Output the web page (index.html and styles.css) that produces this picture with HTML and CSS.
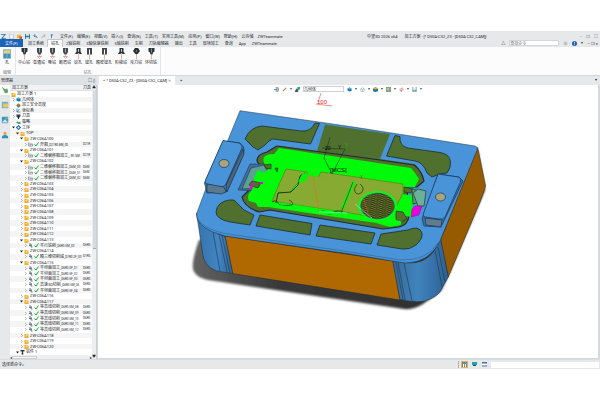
FILE: index.html
```html
<!DOCTYPE html>
<html lang="zh-CN">
<head>
<meta charset="utf-8">
<title>加工方案</title>
<link rel="stylesheet" href="styles.css">
</head>
<body>
<svg class="defs" aria-hidden="true">
  <symbol id="folder" viewBox="0 0 10 10"><path d="M1 2h3l1 1h4v6H1z" fill="#f1a51d"/><path d="M3 4h4v3H3z" fill="#ffdf65"/><path d="M1 8h8v1H1z" fill="#df8518"/></symbol>
  <symbol id="cube" viewBox="0 0 10 10"><path d="M1 3l4-2 4 2v5L5 9 1 7z" fill="#1675a9"/><path d="M1 3l4-2 4 2-4 2z" fill="#45bedb"/></symbol>
  <symbol id="safe" viewBox="0 0 10 10"><circle cx="5" cy="5" r="4" fill="#df7c32"/><path d="M1 5l4 4 4-4-4-1z" fill="#2e8d9d"/></symbol>
  <symbol id="axis" viewBox="0 0 10 10"><path d="M2 1v7h7M2 8l5-6" fill="none" stroke="#2877a0" stroke-width="1.5"/></symbol>
  <symbol id="tool" viewBox="0 0 10 10"><path d="M1 1h8v3L6 8H4L1 5z" fill="#34434b"/><path d="M5 5v5" stroke="#222" stroke-width="2"/></symbol>
  <symbol id="plan" viewBox="0 0 10 10"><path d="M0 5l4-3v2h5v4H4V7z" fill="#38a77a"/></symbol>
  <symbol id="gear" viewBox="0 0 10 10"><circle cx="5" cy="5" r="3" fill="none" stroke="#266eab" stroke-width="2.4"/><path d="M5 0v2M5 8v2M0 5h2M8 5h2" stroke="#266eab" stroke-width="2"/></symbol>
  <symbol id="mill" viewBox="0 0 10 10"><path d="M1 1v7h8V4H6v2H4V1" fill="none" stroke="#7b858b" stroke-width="1.4"/></symbol>
  <symbol id="spiral" viewBox="0 0 10 10"><path d="M2 2h4v6h3M2 5h6" fill="none" stroke="#6c7c84" stroke-width="2"/></symbol>
  <symbol id="part" viewBox="0 0 10 10"><path d="M1 0h8v3H6l1 6H3l1-6H1z" fill="#30343a"/></symbol>
  <symbol id="check" viewBox="0 0 10 10"><path d="M1 5l3 3 5-7" fill="none" stroke="#00b62c" stroke-width="2"/></symbol>
  <symbol id="drill" viewBox="0 0 14 24"><path d="M1 0h12v7l-3 2-1 4H5L4 9 1 7z" fill="#2d3337"/><path d="M6 1h2v8H6z" fill="#889398"/><path d="M7 13v10" stroke="#d45f62"/></symbol>
  <symbol id="drillwide" viewBox="0 0 14 24"><path d="M3 0h8v7l3 5H9l-2-2-2 2H0l3-5z" fill="#2d3438"/><path d="M6 2h2v6H6z" fill="#bbc5ca"/><path d="M7 11v12" stroke="#d45f62"/></symbol>
  <symbol id="ream" viewBox="0 0 14 24"><path d="M2 0h10v13H8V3H6v10H2z" fill="#42484d"/><path d="M7 12v11" stroke="#d45f62"/></symbol>
  <symbol id="chamfer" viewBox="0 0 14 24"><path d="M2 0h10v8l-3 5H5L2 8z" fill="#42484d"/><path d="M6 1h2v8H6z" fill="#9fa9ae"/><path d="M2 16l5 5 5-5M7 13v4M4 17h6" fill="none" stroke="#d45f62"/></symbol>
  <symbol id="disc" viewBox="0 0 14 24"><path d="M4 0h6l4 6-4 5-3 2-3-2-4-5z" fill="#262b2e"/><circle cx="7" cy="6" r="2" fill="#6d777c"/><path d="M7 13v10" stroke="#d45f62"/></symbol>
  <symbol id="down" viewBox="0 0 4 3"><path d="M0 0h4L2 3z" fill="#111"/></symbol>
</svg>
<div class="app">
  <header class="titlebar">
    <div class="quick">
      <svg viewBox="0 0 6 6"><path d="M0 0h6L2 5h4v1H0l4-5H0z" fill="#187b9d"/></svg>
      <svg viewBox="0 0 6 6"><path d="M1 0h3l1 1v5H1z" fill="#fff" stroke="#8c9296" stroke-width=".6"/></svg>
      <svg viewBox="0 0 6 6"><path d="M0 1h5v4H0z" fill="#f2b72c"/><path d="M3 3h3v3H3z" fill="#db5338"/></svg>
      <svg viewBox="0 0 6 6"><path d="M0 0h6v6H0z" fill="#26759b"/><path d="M1 0h4v2H1zM1 4h4v2H1z" fill="#d6edf3"/></svg>
      <svg viewBox="0 0 6 6"><path d="M5 5Q5 2 1 2l2-2M1 2l2 2" fill="none" stroke="#2378bc"/></svg>
      <svg viewBox="0 0 6 6"><path d="M1 5q0-3 4-3L3 0M5 2L3 4" fill="none" stroke="#a9adb0"/></svg>
      <svg viewBox="0 0 6 6"><path d="M2 1h3M3 1v4" fill="none" stroke="#2378bc"/></svg>
    </div>
    <nav class="menu"><a href="#">文件(F)</a><a href="#">编辑(E)</a><a href="#">视图(V)</a><a href="#">插入(I)</a><a href="#">查询(N)</a><a href="#">工具(T)</a><a href="#">实用工具(M)</a><a href="#">应用(P)</a><a href="#">窗口(W)</a><a href="#">帮助(H)</a><a href="#">云存储</a><a href="#">ZWTeammate</a></nav>
    <div class="caption"><span>中望3D 2026 x64</span><span>加工方案 - [* D50A-C52_Z3 - [D50A-C52_CAM]]</span></div>
    <div class="winbtns"><button aria-label="最小化">–</button><button aria-label="还原">❐</button><button aria-label="关闭">□</button></div>
  </header>
  <div class="tabbar">
    <button class="filebtn">文件(F)</button>
    <nav class="tabs"><a href="#">加工系统</a><a href="#" class="active">钻孔</a><a href="#">2轴铣削</a><a href="#">3轴快速铣削</a><a href="#">5轴铣削</a><a href="#">车削</a><a href="#">刀轨编辑器</a><a href="#">输出</a><a href="#">工具</a><a href="#">现场加工</a><a href="#">查询</a><a href="#">App</a><a href="#">ZWTeammate</a></nav>
    <div class="search"><span>△</span><input type="text" aria-label="查找命令" placeholder="查找命令"><svg viewBox="0 0 6 6"><circle cx="3" cy="3" r="2.4" fill="#bcc3c8"/></svg><svg viewBox="0 0 6 6"><circle cx="3" cy="3" r="3" fill="#1863b6"/><path d="M3 1v2M3 4v1" stroke="#fff"/></svg><svg class="tri"><use href="#down"/></svg><span class="docbtns">– ❐ ×</span></div>
  </div>
  <div class="ribbon">
    <section class="group first"><button><svg viewBox="0 0 20 24"><path d="M0 0h20v24H0z" fill="#78bad5"/><path d="M2 3h16v7H2z" fill="#f6cf62"/><path d="M2 12h7v10H2zM11 12h7v10h-7z" fill="#4991bb"/></svg>孔</button><h2>编辑</h2></section>
    <section class="group"><div class="cmds">
      <button><svg><use href="#drill"/></svg>中心钻</button><button><svg><use href="#chamfer"/></svg>普通钻</button><button><svg><use href="#chamfer"/></svg>啄钻</button><button><svg><use href="#chamfer"/></svg>断屑钻</button><button><svg><use href="#drillwide"/></svg>铰孔</button><button><svg><use href="#ream"/></svg>镗孔</button><button><svg><use href="#ream"/></svg>精密镗孔</button><button><svg><use href="#drillwide"/></svg>阶梯钻</button><button><svg><use href="#disc"/></svg>攻刀钻</button><button><svg><use href="#drill"/></svg>环切铣</button>
    </div><h2>钻孔</h2></section>
  </div>
  <main class="work">
    <aside class="manager">
      <div class="paneltitle"><span>管理器</span><span>□ ▯</span></div>
      <div class="panelbody">
        <div class="rail">
          <svg class="on" viewBox="0 0 10 10"><path d="M1 1l4 3 3-1 1 5-4 1z" fill="#49ad72"/><path d="M2 2l5 5" stroke="#c5853e"/></svg>
          <svg viewBox="0 0 10 10"><path d="M1 1h8v8H1z" fill="#5eb2db"/><path d="M2 3h7v5H3z" fill="#f2c653"/></svg>
          <svg viewBox="0 0 10 10"><path d="M1 1h8v8H1z" fill="#3399cc"/><path d="M1 8l4-4 4 4z" fill="#d8e5d6"/><path d="M6 2h2v2H6z" fill="#e1a538"/></svg>
          <svg viewBox="0 0 10 10"><circle cx="5" cy="3" r="2" fill="#e6a448"/><path d="M1 9q0-4 4-4t4 4z" fill="#2a90c3"/></svg>
        </div>
        <div class="treebox">
          <table class="tree"><thead><tr><th>加工方案</th><th>刀具</th></tr></thead><tbody id="rows"></tbody></table>
          <div class="hscroll"><span>◂</span><i></i><span>▸</span></div>
        </div>
        <div class="vscroll"><span>▲</span><i></i><span>▼</span></div>
      </div>
    </aside>
    <section class="document">
      <div class="doctabs"><a href="#"><b>+</b> * D50A-C52_Z3 - [D50A-C52_CAM] <em>✕</em></a><button>+</button><span>▾</span></div>
      <div class="viewport">
        <div class="viewbar">
          <svg viewBox="0 0 6 6"><path d="M2 1h3v4H2M0 3h4" fill="none" stroke="#327889"/><path d="M3 2v2" stroke="#d04744"/></svg>
          <svg viewBox="0 0 6 6"><path d="M1 5l4-4" stroke="#c58a4e" stroke-width="1.5"/></svg><svg class="tri"><use href="#down"/></svg>
          <svg viewBox="0 0 6 6"><path d="M1 2h3v4H1z" fill="#166e9c"/><path d="M3 0h3v3H3z" fill="#31a554"/><path d="M0 4h2v2H0z" fill="#c43028"/></svg>
          <select aria-label="选择过滤"><option>几何体</option></select>
          <svg><use href="#cube"/></svg><svg class="tri"><use href="#down"/></svg>
          <svg viewBox="0 0 6 6"><path d="M1 2l2-1 2 1v3L3 6 1 5zM1 2l2 1 2-1M3 3v3" fill="none" stroke="#7aa2ad" stroke-width=".6"/></svg><svg class="tri"><use href="#down"/></svg>
          <svg viewBox="0 0 6 6"><path d="M0 2l3-2 3 2v3L3 6 0 5z" fill="#167c9e"/><path d="M0 2l3-2 3 2-3 1z" fill="#f3a92c"/></svg><svg class="tri"><use href="#down"/></svg>
          <svg viewBox="0 0 6 6"><path d="M0 0h6v6H0z" fill="#75a2a5"/><path d="M1 1h3v3H1z" fill="#d7bf65"/></svg><svg class="tri"><use href="#down"/></svg>
          <svg viewBox="0 0 6 6"><path d="M1 3l3-2 1 2-3 2zM3 3v3" fill="none" stroke="#cc6666" stroke-width=".8"/></svg><svg class="tri"><use href="#down"/></svg>
          <svg viewBox="0 0 6 6"><path d="M1 0v6M5 0v6M1 4h4" stroke="#43a3b8" fill="none"/><path d="M1 5h4" stroke="#bd6464"/></svg><svg class="tri"><use href="#down"/></svg>
        </div>
        <svg class="scene" viewBox="98 93 500 265" role="img" aria-label="模具三维模型">
          <defs>
            <linearGradient id="sh" x1="0" y1="0" x2="1" y2="0"><stop offset="0" stop-color="#626262"/><stop offset=".3" stop-color="#383838"/><stop offset="1" stop-color="#303030"/></linearGradient>
            <linearGradient id="cl" x1="0" y1="0" x2="1" y2="0"><stop offset="0" stop-color="#3572ab"/><stop offset=".6" stop-color="#4185c3"/><stop offset="1" stop-color="#32669b"/></linearGradient>
            <linearGradient id="cr" x1="0" y1="0" x2="1" y2="0"><stop offset="0" stop-color="#34699a"/><stop offset=".45" stop-color="#4183bd"/><stop offset="1" stop-color="#2c6092"/></linearGradient>
            <filter id="soft" x="-10%" y="-10%" width="120%" height="120%"><feGaussianBlur stdDeviation="1.2"/></filter>
            <pattern id="mesh" width="6" height="4" patternUnits="userSpaceOnUse" patternTransform="rotate(7)"><path d="M0 1q1.500-1 3 0t3 0M0 3q1.500-1 3 0t3 0" fill="none" stroke="#242c0b" stroke-width="1.100"/></pattern>
          </defs>
          <path d="M199 240Q189 268 195 273Q198 278 208 280L350 301L404 309Q414 310 423 304L441 291L450 272L485 190L478 150z" fill="url(#sh)" filter="url(#soft)"/>
          <g stroke="#1c2c36" stroke-width=".5" stroke-linejoin="round">
            <path d="M440.500 240L477.700 147.500L485.700 186L480.500 201L448.300 277z" fill="#965a00"/>
            <path d="M225 236L393 261L400 300L232.700 273.500z" fill="#b06900"/>
            <path d="M196.500 213Q198 224 213 232L225 236.500L232.700 273.500L217 271Q204 267 202.500 253z" fill="url(#cl)"/>
            <path d="M392.700 261L400 299.500Q416 303 425 301Q438 297 441 290L448.300 277L440.500 238Q432 263 410 263z" fill="url(#cr)"/>
            <path d="M213 232l7 39M219 234l8 38M222 235l8 38M396 262l7 38M398 262l7 38M404 263l8 38M438 247l7 35M435 250l7 37" fill="none"/>
            <path d="M240 110.700L350 126.500L475 146Q478 147 477.500 149L440 241Q429 263 405 263L392 261L350 254L225 236L213 232Q196 225 196.500 214L205 191L228 140z" fill="#4994d8"/>
            <path d="M197 218Q203 229 225 233.500L350 252L400 260Q427 261 438 243" fill="none" stroke-width=".3"/>
            <g fill="#50702f" stroke-width=".8">
              <path d="M245 139Q250 127 262 126L301 131Q311 132 315 123L319.500 123.500L310.500 144L273 139Q269 140 265 145L258 150L253 147z"/>
              <path d="M325 124.500L390 134L380 159L415 164Q420 168 419 174L270 152L280 146L317 151z" stroke="none"/>
              <path d="M395 135.500L400 136.500Q399 146 408 148L440 152.500Q450 154 450.500 162Q451 168 447 173L440 174L432 177L427 173Q423 162 415 161L386.500 156z"/>
              <path d="M216 212Q217 202 229 200L234 200L244 210L254 215L250 225L230 222Q216 219 216 212z"/>
              <path d="M260 215L312 223.500L310 235L256 226z"/>
              <path d="M320 225L375 233L371 244L316 236z"/>
              <path d="M381 234L408 230Q419 225 422 233Q423 239 416 245Q410 250 402 249L377 245z"/>
            </g>
            <path d="M277 146L380 160L414 165Q422 171 424 181L417 187L407 187L409 216Q408 225 399 227L383 229L270 210L259 212Q244 207 242 197L249 190L264 172L257 161Q257 154 267 152z" fill="#4f702b" stroke-width="1.200"/>
            <path d="M250 164L264 164L271 174L258 191L238 190z" fill="#416ca0"/>
            <path d="M251 168l13-3 5 10-14 13-13 1z" fill="#5ba092"/>
          </g>
          <path d="M279 148L411 168L415 173L419 179L415 187L405 187L403 194L414 196L411 217L400 215L397 221L401 225L390 227L376 223L268 207L258 207L256 203L249 201Q246 195 252 190L254 178L258 170L264 173L270 167L265 165Q259 154 274 154z" fill="#00fa09"/>
          <path d="M286 169L307 172L309 176L301 175L298 183L293 188L290 193L279 192L276 197L340 211L354 184L318 177L321 172L356 177L403 184L403 193L396 207L390 214L377 218L340 211L272 201L281 180z" fill="#86aa32" stroke="#508a14" stroke-width=".7"/>
          <path d="M309 175L354 182L340 211L274 201L278 193L292 192L298 184L305 181z" fill="#86aa32"/>
          <path d="M276 203L278 193L291 192L298 185L300 176L305 173" fill="none" stroke="#173f0d" stroke-width="1"/>
          <g stroke="#263b10" stroke-width=".7">
            <path d="M264 165l7-1v5l-5-1zM275 168l3 0-1 4zM249 185l3-4 9 2-3 5zM404 187l9 2-2 4-7-1zM396 211l7 1 4 7-8 4-3-4z" fill="#53702d"/>
            <path d="M412 189l5 1 2 12-6 2z" fill="#4f9c85"/>
            <path d="M418 189l8 2-2 15-6 0-5-13z" fill="#6ab09b"/>
          </g>
          <path d="M303 173l7 1-5 7-7 1zM310 174l7-3-2 7z" fill="#00f408"/>
          <path d="M354 182L342 209" stroke="#00fa09" stroke-width="3"/>
          <ellipse cx="377.500" cy="206" rx="19.500" ry="15" fill="#00ff12"/>
          <ellipse cx="377.500" cy="206" rx="17" ry="13" fill="#81923a" stroke="#3a83bc" stroke-width=".6"/>
          <ellipse cx="377.500" cy="206" rx="17" ry="13" fill="url(#mesh)"/>
          <path d="M353 182l-12 31M357 184q-4 5-2 8 3 4 7 0 3-4-2-8M272 202q5-3 6 1t14 2q2-3-3-5M320 212q3-3 7 1t10-2M330 214q8-5 13-2" fill="none" stroke="#234911" stroke-width=".8"/>
          <path d="M275 206l62 8M388 220l13 3" fill="none" stroke="#00ff12" stroke-width="3"/>
          <path d="M412 209l3-3 7 0-3 9-8 2z" fill="#e900df" stroke="#711a6d" stroke-width=".4"/>
          <path d="M254 180l-2 10-3-1zM260 182l3 0 0 2-3 0z" fill="#e900df"/>
          <g stroke="#173553" stroke-width=".7" stroke-linejoin="round">
            <path d="M223 141L240 143Q245 147 244 151L243 155L226 192L207 193L204.500 183z" fill="#3d79b1"/>
            <path d="M223 140.500L239 143Q243 145 242 148L226 184Q224 187 220 187L207 184Q204 183 206 179z" fill="#4994d8"/>
            <path d="M207 184l17 3 2 5-5 2-14-2z" fill="#5b788e"/><path d="M226 185l17-36 1 5-17 38z" fill="#4d6479"/>
            <ellipse cx="224" cy="163.500" rx="5" ry="4" fill="#aaa47d"/>
            <path d="M438 174L459 177L463 181L441 227L424 226L422 219z" fill="#3773a8"/>
            <path d="M438 174Q444 175 458 177Q462 178 460 183L445 217Q443 220 439 219L425 217Q422 216 424 212z" fill="#4994d8"/>
            <path d="M425 218l17 2-1 7-15-2z" fill="#607b8e"/>
            <ellipse cx="440.500" cy="197" rx="5" ry="4" fill="#aaa47d"/>
          </g>
          <g fill="none" stroke-width=".6"><path d="M330 137l-6 21 8 16 13-25-23-1" stroke="#163813"/><path d="M313 176l6 36" stroke="#ee6a19"/><path d="M355 204l17 14M319 212l28 1" stroke="#b5dce7"/><path d="M363 197l5 15M321 93l-3 9M316 104l16 2" stroke="#ff3b35"/></g>
          <g class="marks"><text x="317" y="104" fill="#ff2020">100</text><text x="330" y="172">[MCS]</text><text class="small" x="325" y="150">20</text><text class="small" x="338" y="149">Y</text><text class="small" x="345" y="147" fill="#12b51b">Y</text><text class="small" x="360" y="179" fill="#b34b16">X</text></g>
        </svg>
      </div>
    </section>
  </main>
  <footer class="status"><span>选择新命令&gt;</span><div class="statusright"><button class="sel" aria-label="面板"><svg viewBox="0 0 5 5"><path d="M0 0h5v5H0z" fill="#6d86a1"/><path d="M1 2h1v3H1zM3 2h1v3H3z" fill="#fff"/></svg></button><button aria-label="显示"><svg viewBox="0 0 5 5"><path d="M0 0h5v3H0z" fill="#24a2b5"/><path d="M1 3h3v1H1z" fill="#234d63"/></svg></button><button aria-label="窗口"><svg viewBox="0 0 5 5"><path d="M0 0h5v5H0z" fill="#a5b0c4"/><path d="M0 0h5v1H0z" fill="#3678bd"/><path d="M0 2h5v1H0z" fill="#fff"/></svg></button><input type="text" aria-label="命令"></div></footer>
</div>
<script src="tree.js"></script>
</body>
</html>
```
FILE: styles.css
```css
* { box-sizing: border-box; }
body {
  margin: 0;
  padding: 31px 0;
  height: 100vh;
  background: #fff;
  color: #24282b;
  font: 4px/5px Roboto, "Noto Sans CJK SC", sans-serif;
}
button, input, select { font: inherit; color: inherit; border: 0; padding: 0; margin: 0; background: none; }
a { color: inherit; text-decoration: none; white-space: nowrap; }
h2 { margin: 0; font: inherit; color: #777c80; }
svg { display: block; flex: none; }
.defs { position: absolute; width: 0; height: 0; }
.tri { width: 2px; height: 2px; }

.app { height: 100%; display: flex; flex-direction: column; background: #e6e8ea; }
.titlebar { display: flex; align-items: center; height: 8px; flex: none; padding: 2px 2px 0 1px; }
.quick { display: flex; gap: 3px; width: 59px; flex: none; }
.quick svg { width: 5px; height: 5px; }
.menu { display: flex; gap: 4px; }
.caption { display: flex; gap: 7px; margin-left: auto; margin-right: 93px; white-space: nowrap; }
.winbtns { display: flex; gap: 4px; color: #666; }

.tabbar { display: flex; height: 8px; flex: none; align-items: stretch; }
.filebtn { width: 23px; background: #1c62b7; color: #fff; }
.tabs { display: flex; align-items: stretch; margin-left: 2px; }
.tabs a { padding: 2px 3px 0; }
.tabs .active { background: #fcfcfc; border: 1px solid #c4c8cb; border-bottom: 0; padding-top: 1px; }
.search { display: flex; align-items: center; gap: 4px; margin-left: auto; padding-right: 2px; }
.search input { width: 50px; height: 6px; background: #fff; border: 1px solid #d4d7d9; }
.search input::placeholder { color: #777; opacity: 1; }
.search svg { width: 5px; height: 5px; }
.search .tri { width: 2px; height: 2px; }
.docbtns { white-space: nowrap; }

.ribbon { display: flex; height: 29px; flex: none; background: #fcfcfc; border-bottom: 1px solid #d4d7d9; }
.group { display: flex; flex-direction: column; justify-content: space-between; align-items: center; padding: 1px 3px 0 2px; border-right: 1px solid #e2e4e6; }
.group.first { width: 16px; }
.group button { display: flex; flex-direction: column; align-items: center; white-space: nowrap; }
.group svg { width: 7px; height: 12px; }
.group.first svg { width: 8px; height: 12px; }
.cmds { display: flex; gap: 3px; }

.work { display: flex; flex: 1; min-height: 0; }
.manager { display: flex; flex-direction: column; width: 97px; flex: none; }
.paneltitle { display: flex; justify-content: space-between; height: 9px; flex: none; padding: 2px 2px 0 1px; background: #dfe2e5; }
.panelbody { display: flex; flex: 1; min-height: 0; }
.rail { display: flex; flex-direction: column; width: 10px; flex: none; gap: 5px; }
.rail svg { width: 10px; height: 10px; padding: 1px; }
.rail .on { background: #fff; }
.treebox { flex: 1; min-width: 0; display: flex; flex-direction: column; background: #fff; }
.tree { display: flex; flex-direction: column; flex: 1; min-height: 0; }
.tree thead { display: block; flex: none; height: 6px; background: #f1f2f3; border-bottom: 1px solid #dde0e2; }
.tree tbody { display: grid; grid-auto-rows: minmax(0, 1fr); flex: 1; min-height: 0; }
.tree tr { display: grid; grid-template-columns: minmax(0, 1fr) 10px; align-items: center; }
.tree tbody tr:nth-child(even) { background: #f5f5f5; }
.tree th, .tree td { padding: 0; font-weight: normal; text-align: left; white-space: nowrap; }
.tree th { padding-left: 2px; }
.tree th:last-child { padding-left: 1px; }
.tree td:last-child, .code { font-size: 3px; }
.tree td:last-child { padding-left: 1px; }
.cell { display: flex; align-items: center; gap: 1px; }
.cell svg { width: 5px; height: 5px; }
.cell .twist { width: 3px; height: 3px; }
.l0 { padding-left: 1px; }
.l1 { padding-left: 2px; }
.l2 { padding-left: 6px; }
.l3 { padding-left: 10px; }
.l4 { padding-left: 14px; }
.vscroll { display: flex; flex-direction: column; justify-content: space-between; align-items: center; width: 5px; flex: none; background: #eceeef; border-right: 1px solid #cdd0d3; }
.vscroll i { width: 3px; flex: 1; margin-bottom: 105px; background: #d5dae1; border-bottom: 1px solid #9eabb9; }
.hscroll { display: flex; justify-content: space-between; align-items: center; height: 4px; flex: none; background: #eceeef; }
.hscroll i { width: 25px; height: 3px; background: #fafafa; border: 1px solid #cbd0d3; margin-right: auto; }

.document { display: flex; flex-direction: column; flex: 1; min-width: 0; }
.doctabs { display: flex; gap: 5px; height: 9px; flex: none; padding-left: 2px; }
.doctabs a { background: #fff; padding: 2px 4px 0; min-width: 72px; }
.doctabs b, .doctabs em { color: #a8772c; font-style: normal; }
.doctabs span { margin-left: auto; padding: 1px 3px 0 0; }
.viewport { display: flex; flex-direction: column; flex: 1; min-height: 0; background: #fff; border: solid #d5d8dc; border-width: 0 2px 1px 1px; }
.viewbar { display: flex; align-items: center; gap: 3px; height: 8px; flex: none; align-self: center; }
.viewbar svg { width: 5px; height: 5px; }
.viewbar .tri { width: 2px; height: 2px; }
.viewbar select { appearance: none; width: 41px; height: 6px; border: 1px solid #ccd0d2; background: #fff; }
.scene { width: 100%; flex: 1; min-height: 0; }
.marks { font: 6px "Liberation Sans", sans-serif; }
.marks .small { font-size: 5px; }

.status { display: flex; justify-content: space-between; align-items: center; height: 10px; flex: none; padding: 1px 1px 1px 2px; border-top: 1px solid #d9dce0; }
.statusright { display: flex; align-items: center; gap: 3px; border-left: 1px solid #aeb2b6; padding-left: 2px; height: 100%; }
.statusright button { width: 7px; height: 7px; padding: 1px; }
.statusright .sel { background: #ffe18a; border: 1px solid #dfb64b; padding: 0; }
.statusright svg { width: 5px; height: 5px; }
.statusright input { width: 108px; height: 6px; background: #fff; }
```
FILE: tree.js
```js
const rows = [
  [0, "", "folder", "加工方案 1"], [1, ">", "cube", "几何体"], [1, "", "safe", "加工安全高度"],
  [1, ">", "axis", "坐标系"], [1, ">", "tool", "刀具"], [1, "", "plan", "策略"],
  [1, "v", "gear", "工序"], [2, "v", "folder", "TOP"]
];
const op = (text, tool = "D6R0.", icon = "spiral") => rows.push([4, ">", icon, text, tool]);
const groups = {
  100: [["开粗_D21R0.8M_00", "D21R", "mill"]],
  101: [["二维偏移粗加工_..R1.5M", "D21R", "mill"]],
  102: ["00", "01", "02"].map(n => ["二维偏移粗加工_D6M_" + n, "D6M", "mill"]),
  113: [["平行铣削_D6R0.5M_00"]],
  114: [["精三维切削域_D1R0.2F_00", "D1R0."]],
  115: [["平坦面加工_D6R0.5F_01"], ["平坦面加工_D6R0.5F_02"], ["平坦面加工_D6R0.5F_03"], ["高速3D切削_D6R0.5M_06"], ["平坦面加工_D6R0.5F_04"]],
  117: ["08", "09", "10", "11", "12"].map(n => ["等高线切削_D6R0.5M_" + n])
};
for (let n = 100; n <= 120; n++) {
  rows.push([3, groups[n] ? "v" : ">", "folder", "ZW-C06A" + n]);
  (groups[n] || []).forEach(g => op(...g));
}
rows.push([2, "v", "part", "铝件 1"]);
const twist = {
  ">": '<svg class="twist" viewBox="0 0 6 6"><path d="M2 0l3 3-3 3" fill="none" stroke="#777"/></svg>',
  "v": '<svg class="twist" viewBox="0 0 6 6"><path d="M0 1l3 4 3-4z" fill="#222"/></svg>'
};
const label = (level, text) => {
  const cut = level === 4 ? text.indexOf("_") : text.length;
  return `<span>${text.slice(0, cut)}<span class="code">${text.slice(cut)}</span></span>`;
};
document.getElementById("rows").innerHTML = rows.map(([level, open, icon, text, tool]) =>
  `<tr><td><div class="cell l${level}">${twist[open] || (level ? '<svg class="twist"></svg>' : "")}<svg><use href="#${icon}"/></svg>${level === 4 ? '<svg><use href="#check"/></svg>' : ""}${label(level, text)}</div></td><td>${tool || ""}</td></tr>`).join("");
```
